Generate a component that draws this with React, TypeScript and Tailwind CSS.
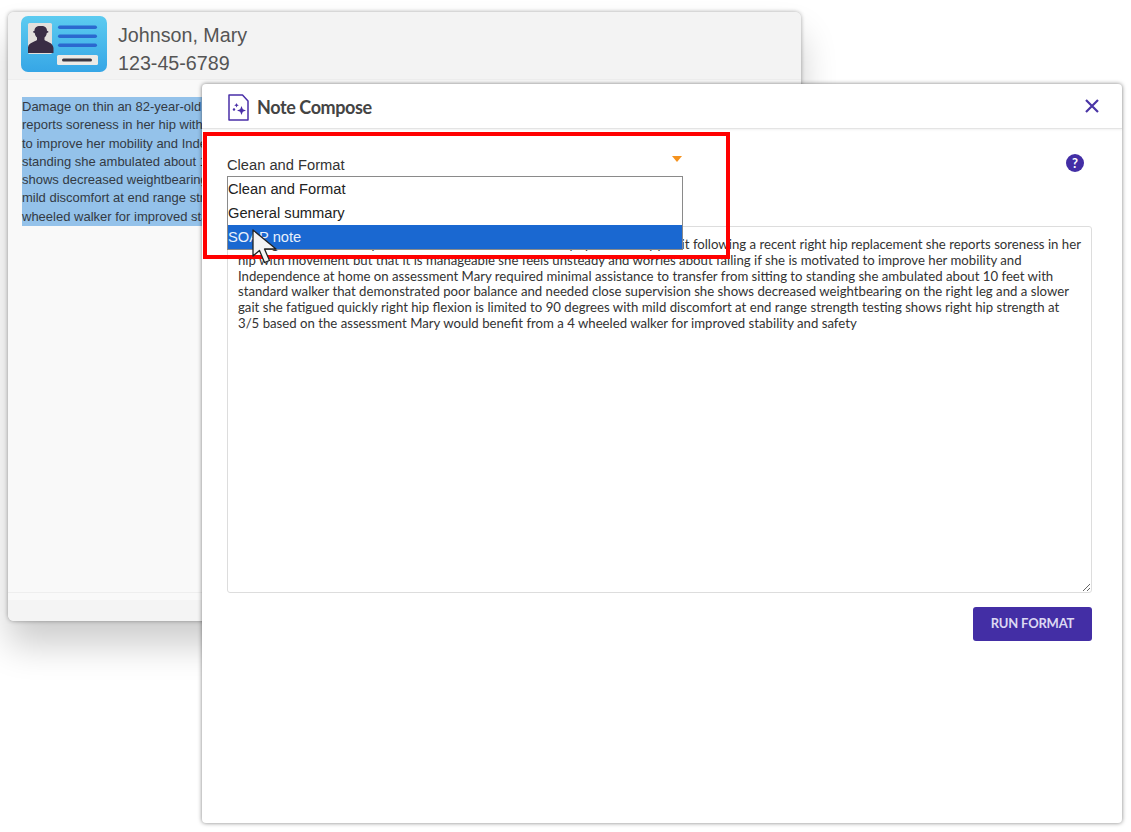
const noteLines = [
  "Damage on thin an 82-year-old woman seen for an initial physical therapy",
  "reports soreness in her hip with movement but that it is manageable she feels",
  "to improve her mobility and Independence at home on assessment Mary required",
  "standing she ambulated about 10 feet with standard walker that demonstrated",
  "shows decreased weightbearing on the right leg and a slower gait she fatigued",
  "mild discomfort at end range strength testing shows right hip strength at 3/5",
  "wheeled walker for improved stability and safety",
]

const noteText =
  "Damage on thin an 82-year-old woman seen for an initial physical therapy visit following a recent right hip replacement she reports soreness in her hip with movement but that it is manageable she feels unsteady and worries about falling if she is motivated to improve her mobility and Independence at home on assessment Mary required minimal assistance to transfer from sitting to standing she ambulated about 10 feet with standard walker that demonstrated poor balance and needed close supervision she shows decreased weightbearing on the right leg and a slower gait she fatigued quickly right hip flexion is limited to 90 degrees with mild discomfort at end range strength testing shows right hip strength at 3/5 based on the assessment Mary would benefit from a 4 wheeled walker for improved stability and safety"

function PatientCard() {
  return (
    <svg width="86" height="56" viewBox="0 0 86 56" className="shrink-0">
      <defs>
        <linearGradient id="card" x1="0" y1="0" x2="0" y2="1">
          <stop offset="0" stopColor="#5ccbf0" />
          <stop offset="1" stopColor="#36a6e6" />
        </linearGradient>
      </defs>
      <rect width="86" height="56" rx="7" fill="url(#card)" />
      <rect x="7" y="7" width="24" height="31" rx="1.500" fill="#e2dfdc" />
      <path
        d="M19 10c-3.500 0-5.500 2-5.500 4.800-1 .4-1.500.8-1.500 1.200 0 .5.800.8 1.700 1 .3 2 1.200 3.500 2.300 4.500v2.500c-2.500 2-8.500 2.500-9 7.500v5.500h25.500v-5c-.5-5.500-6.500-6-9-8v-2.500c1.100-1 2-2.500 2.300-4.500.9-.2 1.700-.5 1.700-1 0-.4-.5-.8-1.500-1.200 0-2.800-2-4.800-5.500-4.800z"
        fill="#3a2d45"
      />
      <rect x="37" y="9.500" width="39" height="3.500" rx="1.700" fill="#2b68cf" />
      <rect x="37" y="18.500" width="39" height="3.500" rx="1.700" fill="#2b68cf" />
      <rect x="37" y="27.500" width="39" height="3.500" rx="1.700" fill="#2b68cf" />
      <rect x="36" y="39" width="41" height="10" rx="1.500" fill="#eceae6" />
      <rect x="41" y="42.500" width="30" height="3" rx="1.500" fill="#3b3740" />
    </svg>
  )
}

function NoteIcon() {
  return (
    <svg width="21" height="27" viewBox="0 0 21 27" fill="none" className="shrink-0">
      <path
        d="M1 1h13.500L20 7v19H1z"
        stroke="#4a2fa8"
        strokeWidth="1.500"
        strokeLinejoin="round"
      />
      <path d="M13.500 12l1.300 3.200 3.200 1.300-3.200 1.300-1.300 3.200-1.300-3.200-3.200-1.300 3.200-1.300z" fill="#4a2fa8" />
      <path d="M8.500 9l.7 1.600 1.600.7-1.600.7-.7 1.600-.7-1.600-1.600-.7 1.600-.7z" fill="#4a2fa8" />
      <circle cx="6" cy="15.500" r="1.200" fill="#4a2fa8" />
    </svg>
  )
}

function Cursor() {
  return (
    <svg
      width="28"
      height="38"
      viewBox="0 0 28 38"
      className="absolute left-[251px] top-[229px]"
    >
      <path
        d="M2 1v26l6.500-5.500 5 12 5-2-5-11.500H25z"
        fill="#f4f4f4"
        stroke="#222"
        strokeWidth="1.300"
        strokeLinejoin="round"
      />
    </svg>
  )
}

export default function App() {
  return (
    <div className="relative h-[832px] w-[1131px] overflow-hidden bg-white font-['Liberation_Sans',sans-serif]">
      {/* patient window behind the dialog */}
      <div className="absolute left-[8px] top-[12px] flex h-[609px] w-[793px] flex-col overflow-hidden rounded-md bg-[#f9f9f9] shadow-[0_24px_36px_rgba(0,0,0,0.2),0_0_4px_rgba(0,0,0,0.35)]">
        <div className="flex h-[68px] items-start gap-[11px] border-b border-[#eeeeee] bg-[#f3f3f3] pl-[13px] pt-[4px]">
          <PatientCard />
          <div className="mt-[5px] text-[19.700px] leading-[28px] text-[#555555]">
            <div>Johnson, Mary</div>
            <div>123-45-6789</div>
          </div>
        </div>
        <div className="flex-1 px-[14px] pt-[17px]">
          <div className="w-[700px] bg-[#94c2ea] pt-px text-[13px] leading-[18.300px] text-[#333a44]">
            {noteLines.map((line) => (
              <div key={line} className="whitespace-nowrap">
                {line}
              </div>
            ))}
          </div>
        </div>
        <div className="h-[8px] border-t border-[#eeeeee]" />
        <div className="h-[21px] bg-[#f4f4f4]" />
      </div>

      {/* note compose dialog */}
      <div className="absolute left-[202px] top-[84px] flex h-[739px] w-[920px] flex-col rounded-[4px] bg-white shadow-[0_0_4px_rgba(0,0,0,0.5)] font-['Lato',sans-serif]">
        <div className="flex h-[45px] items-center justify-between border-b border-[#e4e4e4] pl-[26px] pr-[21px] shadow-[0_1px_2px_rgba(0,0,0,0.06)]">
          <div className="flex items-center gap-[8px] pt-[3px]">
            <NoteIcon />
            <span className="text-[18px] font-bold tracking-[-0.4px] text-[#444444]">
              Note Compose
            </span>
          </div>
          <svg width="18" height="18" viewBox="0 0 18 18" fill="none">
            <path d="M3 3l12 12M15 3L3 15" stroke="#4a35a6" strokeWidth="2.200" />
          </svg>
        </div>

        <div className="flex flex-1 flex-col pl-[25px] pr-[30px] pt-[23px]">
          <div className="flex h-[74px] items-start justify-between pr-[8px]">
            <div className="flex w-[456px] items-center justify-between pr-[1px] pt-[1px] font-['Liberation_Sans',sans-serif] text-[14.700px] leading-[22px] text-[#333333]">
              <span className="pt-px">Clean and Format</span>
              <span className="mb-[11px] h-0 w-0 border-x-[5px] border-t-[6px] border-x-transparent border-t-[#f5921e]" />
            </div>
            <span className="mt-[2px] flex size-[18px] items-center justify-center rounded-full bg-[#432ea5] text-[13px] font-bold leading-none text-white">
              ?
            </span>
          </div>
          <textarea
            readOnly
            defaultValue={noteText}
            className="h-[367px] w-[865px] rounded-[3px] border border-[#dddddd] p-[10px] text-[13.200px] leading-[15.800px] text-[#333333] outline-none"
          />
          <div className="mt-[14px] flex justify-end">
            <button className="h-[34px] w-[119px] rounded-[3px] bg-[#432ea5] text-[13px] font-bold tracking-[-0.2px] text-[#dcd8f2]">
              RUN FORMAT
            </button>
          </div>
        </div>
      </div>

      {/* open select list */}
      <div className="absolute left-[227px] top-[176px] w-[456px] border border-[#8a8a8a] bg-white text-[14.700px] leading-[24px] text-[#222222]">
        <div className="h-[24px]">Clean and Format</div>
        <div className="h-[24px]">General summary</div>
        <div className="h-[24px] bg-[#1a68d1] text-[#e8f0fc]">SOAP note</div>
      </div>

      {/* callout */}
      <div className="absolute left-[203px] top-[132px] h-[127px] w-[527px] border-[4px] border-[#ff0000]" />
      <Cursor />
    </div>
  )
}
